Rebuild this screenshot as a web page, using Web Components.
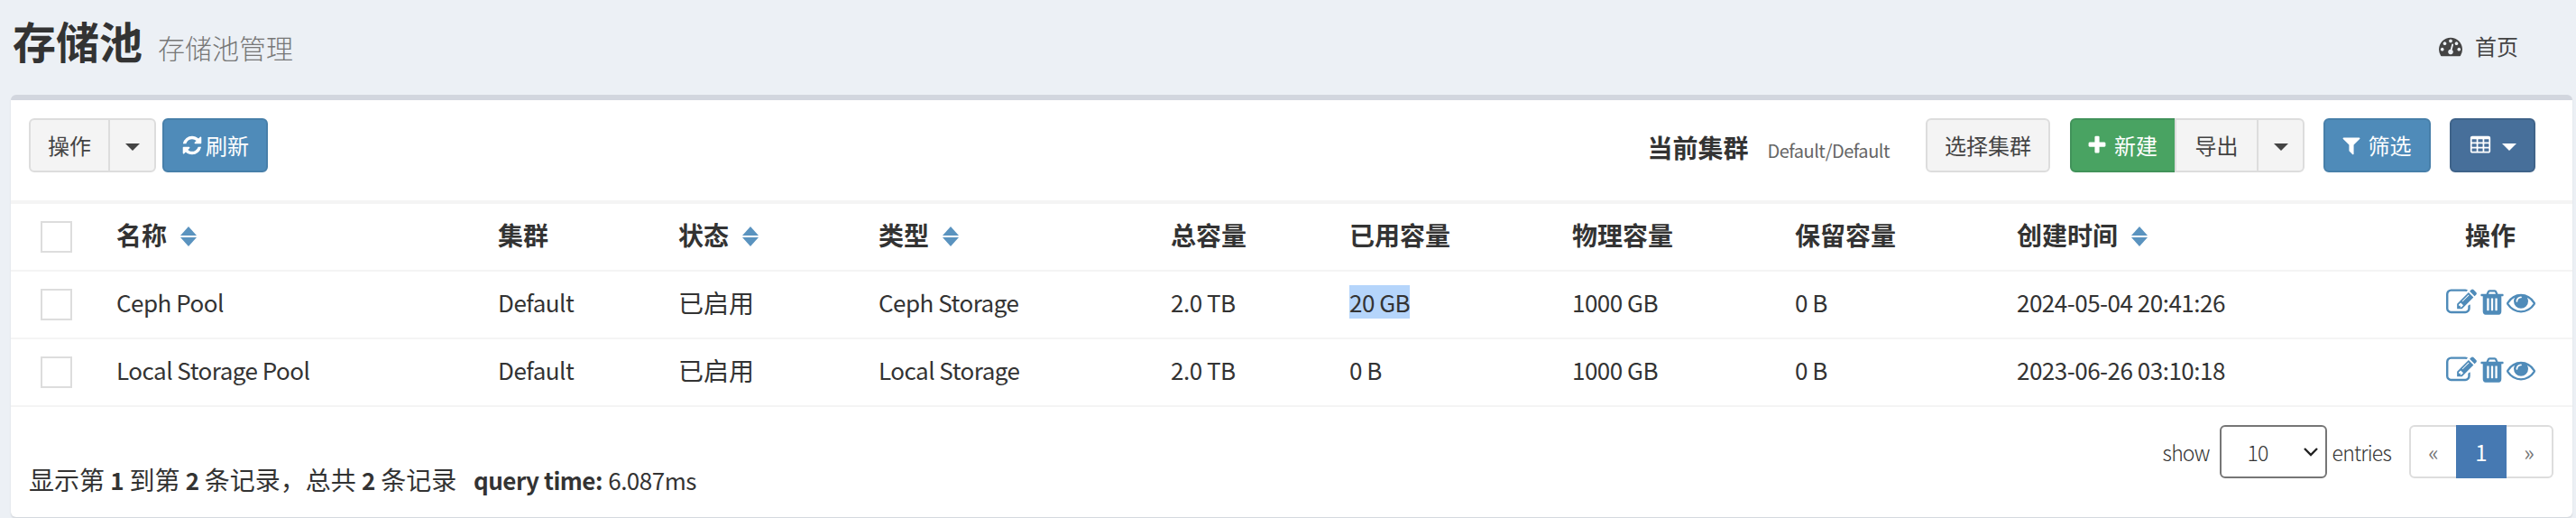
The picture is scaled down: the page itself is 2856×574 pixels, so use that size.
<!DOCTYPE html>
<html lang="zh">
<head>
<meta charset="utf-8">
<title>存储池</title>
<style>
  html, body {
    margin: 0;
    height: 574px;
    overflow: hidden;
    background: #ecf0f5;
    color: #333;
    font-family: "Noto Sans CJK SC", "Noto Sans", sans-serif;
  }

  /* latin runs in the reference are narrower than the cjk font's own latin */
  .lat {
    font-size: 26px;
    letter-spacing: -.5px;
  }

  .picked {
    background: #b5d5fb;
  }
</style>
</head>
<body>
<page-header title="存储池" subtitle="存储池管理" crumb="首页"></page-header>
<pool-box>
  <box-toolbar>
    <btn-group slot="left">
      <tool-btn>操作</tool-btn>
      <tool-btn caret></tool-btn>
    </btn-group>
    <tool-btn slot="left" variant="blue" icon="refresh" tight style="margin-left: 7px">刷新</tool-btn>

    <cluster-label slot="right" name="当前集群" value="Default/Default"></cluster-label>
    <tool-btn slot="right" style="margin-left: 40px">选择集群</tool-btn>
    <btn-group slot="right" style="margin-left: 22px">
      <tool-btn variant="green" icon="plus">新建</tool-btn>
      <tool-btn style="padding: 0 20.5px">导出</tool-btn>
      <tool-btn caret></tool-btn>
    </btn-group>
    <tool-btn slot="right" variant="blue" icon="filter" style="margin-left: 21px; padding: 0 19.5px">筛选</tool-btn>
    <tool-btn slot="right" variant="navy" icon="table" caret style="margin-left: 21px"></tool-btn>
  </box-toolbar>

  <pool-row head>
    <span><row-check></row-check></span>
    <span>名称<sort-mark></sort-mark></span>
    <span>集群</span>
    <span>状态<sort-mark></sort-mark></span>
    <span>类型<sort-mark></sort-mark></span>
    <span>总容量</span>
    <span>已用容量</span>
    <span>物理容量</span>
    <span>保留容量</span>
    <span>创建时间<sort-mark></sort-mark></span>
    <span style="text-align: center">操作</span>
  </pool-row>
  <pool-row>
    <span><row-check></row-check></span>
    <span class="lat">Ceph Pool</span>
    <span class="lat">Default</span>
    <span>已启用</span>
    <span class="lat">Ceph Storage</span>
    <span class="lat">2.0 TB</span>
    <span class="lat"><span class="picked">20 GB</span></span>
    <span class="lat">1000 GB</span>
    <span class="lat">0 B</span>
    <span class="lat">2024-05-04 20:41:26</span>
    <span><row-actions></row-actions></span>
  </pool-row>
  <pool-row>
    <span><row-check></row-check></span>
    <span class="lat">Local Storage Pool</span>
    <span class="lat">Default</span>
    <span>已启用</span>
    <span class="lat">Local Storage</span>
    <span class="lat">2.0 TB</span>
    <span class="lat">0 B</span>
    <span class="lat">1000 GB</span>
    <span class="lat">0 B</span>
    <span class="lat">2023-06-26 03:10:18</span>
    <span><row-actions></row-actions></span>
  </pool-row>

  <box-footer>
    <span slot="info">显示第 <b class="lat">1</b> 到第 <b class="lat">2</b> 条记录，总共 <b class="lat">2</b> 条记录 &nbsp; <b class="lat">query time:</b> <span class="lat">6.087ms</span></span>
    <page-size slot="size"></page-size>
    <page-nav slot="nav"></page-nav>
  </box-footer>
</pool-box>

<script>
const ICONS = {
  refresh: 'M1639 1056q0 5-1 7-64 268-268 434.5t-478 166.5q-146 0-282.5-55t-243.5-157l-129 129q-19 19-45 19t-45-19-19-45v-448q0-26 19-45t45-19h448q26 0 45 19t19 45-19 45l-137 137q71 66 161 102t187 36q134 0 250-65t186-179q11-17 53-117 8-23 30-23h192q13 0 22.5 9.5t9.5 22.5zm25-800v448q0 26-19 45t-45 19h-448q-26 0-45-19t-19-45 19-45l138-138q-148-137-349-137-134 0-250 65t-186 179q-11 17-53 117-8 23-30 23h-199q-13 0-22.5-9.5t-9.5-22.5v-7q65-268 270-434.5t480-166.5q146 0 284 55.5t245 156.5l130-129q19-19 45-19t45 19 19 45z',
  edit: 'M888 1184l116-116-152-152-116 116v56h96v96h56zm440-720q-16-16-33 1l-350 350q-17 17-1 33t33-1l350-350q17-17 1-33zm80 594v190q0 119-84.5 203.5t-203.5 84.5h-832q-119 0-203.5-84.5t-84.5-203.5v-832q0-119 84.5-203.5t203.5-84.5h832q63 0 117 25 15 7 18 23 3 17-9 29l-49 49q-14 14-32 8-23-6-45-6h-832q-66 0-113 47t-47 113v832q0 66 47 113t113 47h832q66 0 113-47t47-113v-126q0-13 9-22l64-64q15-15 35-7t20 29zm-96-738l288 288-672 672h-288v-288zm444 132l-92 92-288-288 92-92q28-28 68-28t68 28l152 152q28 28 28 68t-28 68z',
  trash: 'M704 1376v-704q0-14-9-23t-23-9h-64q-14 0-23 9t-9 23v704q0 14 9 23t23 9h64q14 0 23-9t9-23zm256 0v-704q0-14-9-23t-23-9h-64q-14 0-23 9t-9 23v704q0 14 9 23t23 9h64q14 0 23-9t9-23zm256 0v-704q0-14-9-23t-23-9h-64q-14 0-23 9t-9 23v704q0 14 9 23t23 9h64q14 0 23-9t9-23zm-544-992h448l-48-117q-7-9-17-11h-317q-10 2-17 11zm928 32v64q0 14-9 23t-23 9h-96v948q0 83-47 143.5t-113 60.5h-832q-66 0-113-58.5t-47-141.5v-952h-96q-14 0-23-9t-9-23v-64q0-14 9-23t23-9h309l70-167q15-37 54-63t79-26h320q40 0 79 26t54 63l70 167h309q14 0 23 9t9 23z',
  eye: 'M1664 960q-152-236-381-353 61 104 61 225 0 185-131.5 316.5t-316.5 131.5-316.5-131.5-131.5-316.5q0-121 61-225-229 117-381 353 133 205 333.5 326.5t434.5 121.5 434.5-121.5 333.5-326.5zm-720-384q0-20-14-34t-34-14q-125 0-214.5 89.5t-89.5 214.5q0 20 14 34t34 14 34-14 14-34q0-86 61-147t147-61q20 0 34-14t14-34zm848 384q0 34-20 69-140 230-376.5 368.5t-499.5 138.5-499.5-139-376.5-368q-20-35-20-69t20-69q140-229 376.5-368t499.5-139 499.5 139 376.5 368q20 35 20 69z',
  dashboard: 'M384 1152q0-53-37.5-90.5t-90.5-37.5-90.5 37.5-37.5 90.5 37.5 90.5 90.5 37.5 90.5-37.5 37.5-90.5zm192-448q0-53-37.5-90.5t-90.5-37.5-90.5 37.5-37.5 90.5 37.5 90.5 90.5 37.5 90.5-37.5 37.5-90.5zm428 481l101-382q6-26-7.5-48.5t-38.5-29.5-48 6.5-30 39.5l-101 382q-60 5-107 43.5t-63 98.5q-20 77 20 146t117 89 146-20 89-117q16-60-6-117t-72-91zm660-33q0-53-37.5-90.5t-90.5-37.5-90.5 37.5-37.5 90.5 37.5 90.5 90.5 37.5 90.5-37.5 37.5-90.5zm-640-640q0-53-37.5-90.5t-90.5-37.5-90.5 37.5-37.5 90.5 37.5 90.5 90.5 37.5 90.5-37.5 37.5-90.5zm448 192q0-53-37.5-90.5t-90.5-37.5-90.5 37.5-37.5 90.5 37.5 90.5 90.5 37.5 90.5-37.5 37.5-90.5zm320 448q0 261-141 483-19 29-54 29h-1402q-35 0-54-29-141-221-141-483 0-182 71-348t191-286 286-191 348-71 348 71 286 191 191 286 71 348z',
  filter: 'M1595 295q17 41-14 70l-493 493v742q0 42-39 59-13 5-25 5-27 0-45-19l-256-256q-19-19-19-45v-486l-493-493q-31-29-14-70 17-39 59-39h1280q42 0 59 39z',
  plus: 'M1600 736v192q0 40-28 68t-68 28h-416v416q0 40-28 68t-68 28h-192q-40 0-68-28t-28-68v-416h-416q-40 0-68-28t-28-68v-192q0-40 28-68t68-28h416v-416q0-40 28-68t68-28h192q40 0 68 28t28 68v416h416q40 0 68 28t28 68z',
  table: 'M576 1376v-192q0-14-9-23t-23-9h-320q-14 0-23 9t-9 23v192q0 14 9 23t23 9h320q14 0 23-9t9-23zm0-384v-192q0-14-9-23t-23-9h-320q-14 0-23 9t-9 23v192q0 14 9 23t23 9h320q14 0 23-9t9-23zm512 384v-192q0-14-9-23t-23-9h-320q-14 0-23 9t-9 23v192q0 14 9 23t23 9h320q14 0 23-9t9-23zm-512-768v-192q0-14-9-23t-23-9h-320q-14 0-23 9t-9 23v192q0 14 9 23t23 9h320q14 0 23-9t9-23zm512 384v-192q0-14-9-23t-23-9h-320q-14 0-23 9t-9 23v192q0 14 9 23t23 9h320q14 0 23-9t9-23zm512 384v-192q0-14-9-23t-23-9h-320q-14 0-23 9t-9 23v192q0 14 9 23t23 9h320q14 0 23-9t9-23zm-512-768v-192q0-14-9-23t-23-9h-320q-14 0-23 9t-9 23v192q0 14 9 23t23 9h320q14 0 23-9t9-23zm512 384v-192q0-14-9-23t-23-9h-320q-14 0-23 9t-9 23v192q0 14 9 23t23 9h320q14 0 23-9t9-23zm0-384v-192q0-14-9-23t-23-9h-320q-14 0-23 9t-9 23v192q0 14 9 23t23 9h320q14 0 23-9t9-23zm128-320v1088q0 66-47 113t-113 47h-1344q-66 0-113-47t-47-113v-1088q0-66 47-113t113-47h1344q66 0 113 47t47 113z',
};

function iconSvg(name, size) {
  return `<svg width="${size}" height="${size}" viewBox="0 0 1792 1792" fill="currentColor" aria-hidden="true"><path d="${ICONS[name]}"/></svg>`;
}

class PageHeader extends HTMLElement {
  connectedCallback() {
    this.attachShadow({ mode: 'open' }).innerHTML = `
      <style>
        :host {
          display: flex;
          align-items: center;
          justify-content: space-between;
          box-sizing: border-box;
          height: 105px;
          padding: 0 64px 4px 14px;
        }

        .title {
          display: flex;
          align-items: baseline;
          margin-top: -8px;
        }

        h1 {
          margin: 0;
          font-size: 48px;
          font-weight: 700;
          line-height: 1;
          color: #333;
        }

        small {
          margin-left: 17px;
          font-size: 30px;
          font-weight: 300;
          color: #777;
        }

        .crumb {
          display: flex;
          align-items: center;
          gap: 14px;
          font-size: 24px;
          color: #444;
        }
      </style>
      <div class="title"><h1>${this.getAttribute('title')}</h1><small>${this.getAttribute('subtitle')}</small></div>
      <div class="crumb">${iconSvg('dashboard', 26)}<span>${this.getAttribute('crumb')}</span></div>
    `;
  }
}

class PoolBox extends HTMLElement {
  connectedCallback() {
    this.attachShadow({ mode: 'open' }).innerHTML = `
      <style>
        :host {
          display: block;
          box-sizing: border-box;
          height: 468px;
          margin: 0 4px 0 12px;
          background: #fff;
          border-top: 6px solid #d2d6de;
          border-radius: 6px;
          box-shadow: 0 2px 2px rgba(0, 0, 0, .1);
        }
      </style>
      <slot></slot>
    `;
  }
}

class BoxToolbar extends HTMLElement {
  connectedCallback() {
    this.attachShadow({ mode: 'open' }).innerHTML = `
      <style>
        :host {
          display: flex;
          align-items: flex-start;
          justify-content: space-between;
          box-sizing: border-box;
          height: 115px;
          padding: 20px 41px 0 20px;
          border-bottom: 4px solid #f4f4f4;
        }

        .side {
          display: flex;
          align-items: flex-start;
        }
      </style>
      <div class="side"><slot name="left"></slot></div>
      <div class="side"><slot name="right"></slot></div>
    `;
  }
}

class BtnGroup extends HTMLElement {
  connectedCallback() {
    this.attachShadow({ mode: 'open' }).innerHTML = `
      <style>
        :host {
          display: inline-flex;
        }

        ::slotted(tool-btn:not(:first-child)) {
          --radius-left: 0;
          margin-left: -2px;
        }

        ::slotted(tool-btn:not(:last-child)) {
          --radius-right: 0;
        }
      </style>
      <slot></slot>
    `;
  }
}

class ToolBtn extends HTMLElement {
  connectedCallback() {
    const icon = this.getAttribute('icon');
    const hasLabel = this.textContent.trim() !== '';
    const hasCaret = this.hasAttribute('caret');
    const tight = this.hasAttribute('tight');

    this.attachShadow({ mode: 'open' }).innerHTML = `
      <style>
        :host {
          display: inline-flex;
          align-items: center;
          justify-content: center;
          box-sizing: border-box;
          height: 60px;
          padding: 0 ${hasLabel ? 19 : (icon ? 19.5 : 16.5)}px;
          background: #f4f4f4;
          border: 2px solid #ddd;
          border-radius: var(--radius-left, 6px) var(--radius-right, 6px) var(--radius-right, 6px) var(--radius-left, 6px);
          color: #444;
          font-size: 24px;
          line-height: 1;
        }

        :host([variant="blue"]) {
          background: #4f8bb9;
          border-color: #477fa9;
          color: #fff;
        }

        :host([variant="green"]) {
          background: #49a362;
          border-color: #41925a;
          color: #fff;
        }

        :host([variant="navy"]) {
          background: #476f9a;
          border-color: #3f6389;
          color: #fff;
        }

        svg {
          display: block;
          margin-left: ${hasLabel && !tight ? -3 : 0}px;
          margin-right: ${hasLabel ? (tight ? 3 : 7) : 0}px;
        }

        .caret {
          width: 0;
          height: 0;
          margin-top: 3px;
          margin-left: ${icon ? 12 : 0}px;
          border-top: 8px solid currentColor;
          border-left: 8px solid transparent;
          border-right: 8px solid transparent;
        }
      </style>
      ${icon ? iconSvg(icon, 24) : ''}
      <slot></slot>
      ${hasCaret ? '<span class="caret"></span>' : ''}
    `;
  }
}

class ClusterLabel extends HTMLElement {
  connectedCallback() {
    this.attachShadow({ mode: 'open' }).innerHTML = `
      <style>
        :host {
          display: inline-flex;
          align-items: baseline;
          gap: 21px;
          padding-top: 12px;
          color: #333;
        }

        b {
          font-size: 28px;
          font-weight: 700;
        }

        small {
          font-size: 20px;
          letter-spacing: -.5px;
          color: #666;
        }
      </style>
      <b>${this.getAttribute('name')}</b><small>${this.getAttribute('value')}</small>
    `;
  }
}

class PoolRow extends HTMLElement {
  connectedCallback() {
    const head = this.hasAttribute('head');

    this.attachShadow({ mode: 'open' }).innerHTML = `
      <style>
        :host {
          display: grid;
          grid-template-columns: 117px 423px 200px 222px 324px 198px 247px 247px 246px 434px 182px;
          align-items: center;
          box-sizing: border-box;
          height: 75px;
          padding-bottom: 6px;
          border-bottom: 2px solid #f4f4f4;
          color: #333;
          font-size: 28px;
          font-weight: ${head ? 700 : 400};
        }
      </style>
      <slot></slot>
    `;
  }
}

class RowCheck extends HTMLElement {
  connectedCallback() {
    this.attachShadow({ mode: 'open' }).innerHTML = `
      <style>
        :host {
          display: block;
          box-sizing: border-box;
          width: 35px;
          height: 35px;
          margin: 6px 0 0 33px;
          background: #fff;
          border: 2px solid #ddd;
        }
      </style>
    `;
  }
}

class SortMark extends HTMLElement {
  connectedCallback() {
    this.attachShadow({ mode: 'open' }).innerHTML = `
      <style>
        :host {
          display: inline-flex;
          flex-direction: column;
          gap: 2px;
          margin-left: 15px;
          vertical-align: 11px;
        }

        i {
          width: 0;
          height: 0;
          border-left: 9px solid transparent;
          border-right: 9px solid transparent;
        }

        .up {
          border-bottom: 10px solid #5a93bf;
        }

        .down {
          border-top: 10px solid #5a93bf;
        }
      </style>
      <i class="up"></i><i class="down"></i>
    `;
  }
}

class RowActions extends HTMLElement {
  connectedCallback() {
    this.attachShadow({ mode: 'open' }).innerHTML = `
      <style>
        :host {
          display: flex;
          align-items: center;
          justify-content: center;
          color: #4f8bb9;
        }

        svg {
          display: block;
        }

        svg:nth-child(1) {
          margin-right: 4px;
        }

        svg:nth-child(2) {
          margin-right: 1px;
        }
      </style>
      ${iconSvg('edit', 34)}${iconSvg('trash', 32)}${iconSvg('eye', 32)}
    `;
  }
}

class BoxFooter extends HTMLElement {
  connectedCallback() {
    this.attachShadow({ mode: 'open' }).innerHTML = `
      <style>
        :host {
          display: flex;
          justify-content: space-between;
          box-sizing: border-box;
          padding: 20px 21px 0 20px;
        }

        .info {
          padding-top: 40px;
          font-size: 28px;
          color: #333;
        }

        .right {
          display: flex;
          align-items: flex-start;
          gap: 20px;
        }
      </style>
      <div class="info"><slot name="info"></slot></div>
      <div class="right"><slot name="size"></slot><slot name="nav"></slot></div>
    `;
  }
}

class PageSize extends HTMLElement {
  connectedCallback() {
    this.attachShadow({ mode: 'open' }).innerHTML = `
      <style>
        :host {
          display: inline-flex;
          align-items: center;
          gap: 6px;
          height: 59px;
          font-size: 23px;
          letter-spacing: -.8px;
          font-weight: 300;
          color: #333;
        }

        select {
          appearance: none;
          box-sizing: border-box;
          width: 119px;
          height: 59px;
          margin-left: 5px;
          padding: 0 0 0 29px;
          background: #fff url("data:image/svg+xml,%3Csvg xmlns='http://www.w3.org/2000/svg' width='18' height='12'%3E%3Cpath d='M2 2l7 7 7-7' fill='none' stroke='%23222' stroke-width='2.4'/%3E%3C/svg%3E") no-repeat right 7px center;
          border: 2px solid #767676;
          border-radius: 6px;
          color: #333;
          font: inherit;
          letter-spacing: inherit;
        }
      </style>
      <span>show</span>
      <select><option>10</option><option>25</option><option>50</option></select>
      <span>entries</span>
    `;
  }
}

class PageNav extends HTMLElement {
  connectedCallback() {
    this.attachShadow({ mode: 'open' }).innerHTML = `
      <style>
        :host {
          display: inline-flex;
          box-sizing: border-box;
          height: 59px;
          border: 2px solid #ddd;
          border-radius: 6px;
          font-size: 24px;
        }

        a {
          display: flex;
          align-items: center;
          justify-content: center;
          width: 50px;
          color: #777;
        }

        .on {
          width: 56px;
          margin: -2px 0;
          background: #4679b2;
          color: #fff;
        }
      </style>
      <a>«</a><a class="on">1</a><a>»</a>
    `;
  }
}

customElements.define('page-header', PageHeader);
customElements.define('pool-box', PoolBox);
customElements.define('box-toolbar', BoxToolbar);
customElements.define('btn-group', BtnGroup);
customElements.define('tool-btn', ToolBtn);
customElements.define('cluster-label', ClusterLabel);
customElements.define('pool-row', PoolRow);
customElements.define('row-check', RowCheck);
customElements.define('sort-mark', SortMark);
customElements.define('row-actions', RowActions);
customElements.define('box-footer', BoxFooter);
customElements.define('page-size', PageSize);
customElements.define('page-nav', PageNav);
</script>
</body>
</html>
